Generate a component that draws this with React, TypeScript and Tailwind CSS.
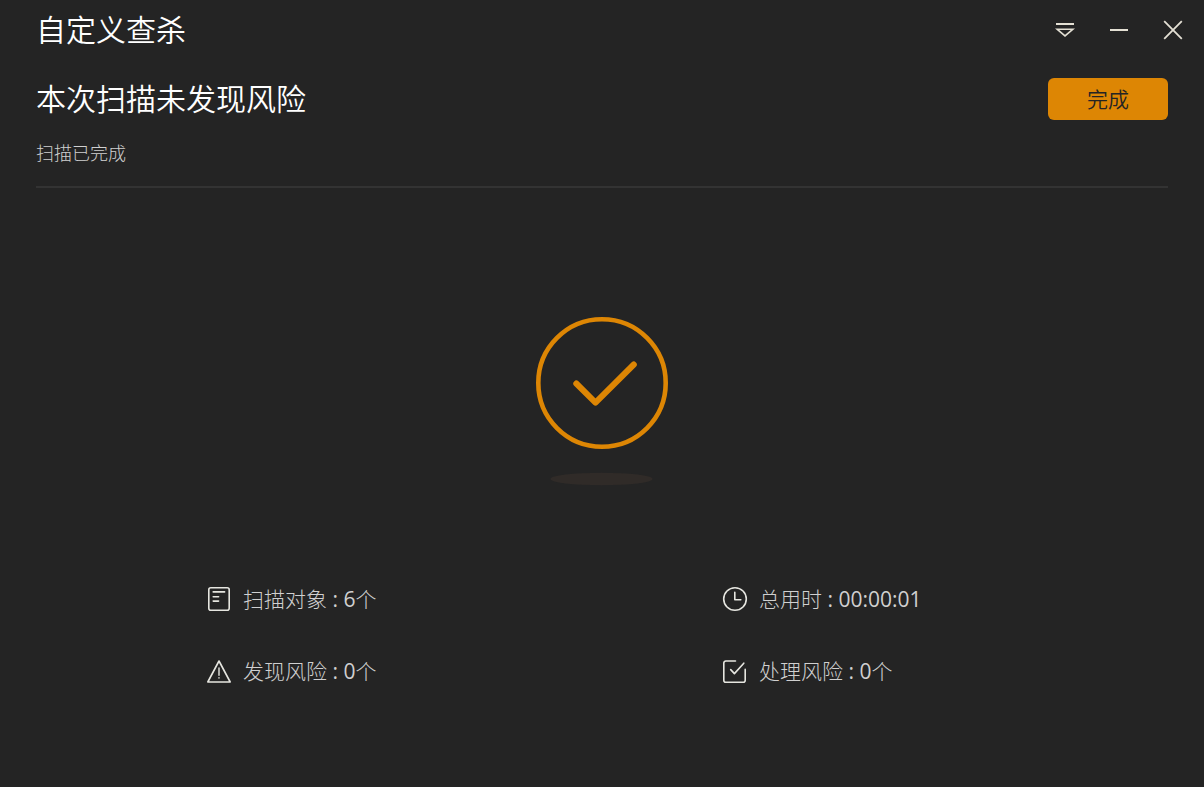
import type { ReactNode } from 'react';

interface StatProps {
  icon: ReactNode;
  label: string;
  value: string;
  unit?: string;
}

const iconProps = {
  viewBox: '0 0 26 26',
  fill: 'none',
  stroke: 'currentColor',
  strokeWidth: 1.6,
  strokeLinecap: 'round' as const,
  strokeLinejoin: 'round' as const,
  className: 'w-[26px] h-[26px] shrink-0 text-[#e6e6e0]',
  'aria-hidden': true
};

function DocumentIcon() {
  return (
    <svg {...iconProps}>
      <rect x="2.8" y="1.8" width="20.4" height="22.4" rx="2" />
      <path d="M7.2 5.9H18.6M7.2 10.7H12.6M7.2 15.1H12.6" />
    </svg>
  );
}

function ClockIcon() {
  return (
    <svg {...iconProps}>
      <circle cx="13" cy="13" r="11.3" />
      <path d="M12.8 6.3V13.8H18.8" />
    </svg>
  );
}

function WarningIcon() {
  return (
    <svg {...iconProps}>
      <path d="M13 3L24.2 24H1.8Z" />
      <path d="M13 10V17.2M13 19.8V20" strokeWidth="1.4" />
    </svg>
  );
}

function HandledIcon() {
  return (
    <svg {...iconProps}>
      <path d="M13.5 3H3.8A2 2 0 0 0 1.8 5V22.2A2 2 0 0 0 3.8 24.2H21.2A2 2 0 0 0 23.2 22.2V11.4" />
      <path d="M8.7 11.6L12.4 15.6L21.8 5.2" />
    </svg>
  );
}

function ResultBadge() {
  return (
    <svg viewBox="0 0 132 169" fill="none" className="w-[132px] h-[169px]" aria-hidden>
      <circle cx="66" cy="66" r="63.7" stroke="#dd8604" strokeWidth="4.6" />
      <path
        d="M40.3 66.5L59.5 85.6L97.8 47.5"
        stroke="#dd8604"
        strokeWidth="6"
        strokeLinecap="round"
        strokeLinejoin="round"
      />
      <ellipse cx="65.5" cy="162" rx="51" ry="6.3" fill="#302b28" />
    </svg>
  );
}

function Stat({ icon, label, value, unit }: StatProps) {
  return (
    <div className="flex items-center gap-[11px] pl-[120px] h-[26px] whitespace-nowrap">
      {icon}
      <span>
        <span className="font-light">{label}</span> : {value}
        {unit && <span className="font-light">{unit}</span>}
      </span>
    </div>
  );
}

export default function App() {
  const windowButton = 'flex items-center justify-center w-[54px] h-[60px] text-[#e4e0d4]';

  return (
    <div className="min-h-screen flex flex-col bg-[#242424] text-white font-['Open_Sans','Noto_Sans_CJK_SC',sans-serif]">
      <header className="flex items-center justify-between h-[60px] pl-9 pr-1">
        <h1 className="text-[30px] leading-[60px] font-[350]">自定义查杀</h1>
        <div className="flex">
          <button type="button" aria-label="菜单" className={windowButton}>
            <svg viewBox="0 0 20 20" fill="none" stroke="currentColor" className="w-5 h-5">
              <path d="M1 4H19" strokeWidth="2" />
              <path d="M2 9.2H18L10 15.9Z" strokeWidth="1.6" />
            </svg>
          </button>
          <button type="button" aria-label="最小化" className={windowButton}>
            <svg viewBox="0 0 20 20" fill="none" stroke="currentColor" className="w-5 h-5">
              <path d="M1 10H19" strokeWidth="2" />
            </svg>
          </button>
          <button type="button" aria-label="关闭" className={windowButton}>
            <svg viewBox="0 0 20 20" fill="none" stroke="currentColor" className="w-5 h-5">
              <path d="M1.2 1.2L18.8 18.8M18.8 1.2L1.2 18.8" strokeWidth="1.8" />
            </svg>
          </button>
        </div>
      </header>

      <section className="mx-9 pt-[18px] pb-[19px] border-b-2 border-[#333333]">
        <div className="flex items-center justify-between">
          <h2 className="text-[30px] leading-[42px] font-[350]">本次扫描未发现风险</h2>
          <button
            type="button"
            className="w-[120px] h-[42px] rounded-md bg-[#dd8604] text-[#242424] text-[21px] leading-[42px] font-[350]"
          >
            完成
          </button>
        </div>
        <p className="mt-5 text-[18px] leading-[27px] font-light text-[#d0d0d0]">扫描已完成</p>
      </section>

      <main className="flex-1 flex flex-col">
        <div className="flex-1 flex items-center justify-center pt-[29px]">
          <ResultBadge />
        </div>
        <div className="grid grid-cols-2 gap-y-[46px] mx-[86px] mb-[103px] text-[21px] leading-[26px] text-[#d0d0d0]">
          <Stat icon={<DocumentIcon />} label="扫描对象" value="6" unit="个" />
          <Stat icon={<ClockIcon />} label="总用时" value="00:00:01" />
          <Stat icon={<WarningIcon />} label="发现风险" value="0" unit="个" />
          <Stat icon={<HandledIcon />} label="处理风险" value="0" unit="个" />
        </div>
      </main>
    </div>
  );
}
